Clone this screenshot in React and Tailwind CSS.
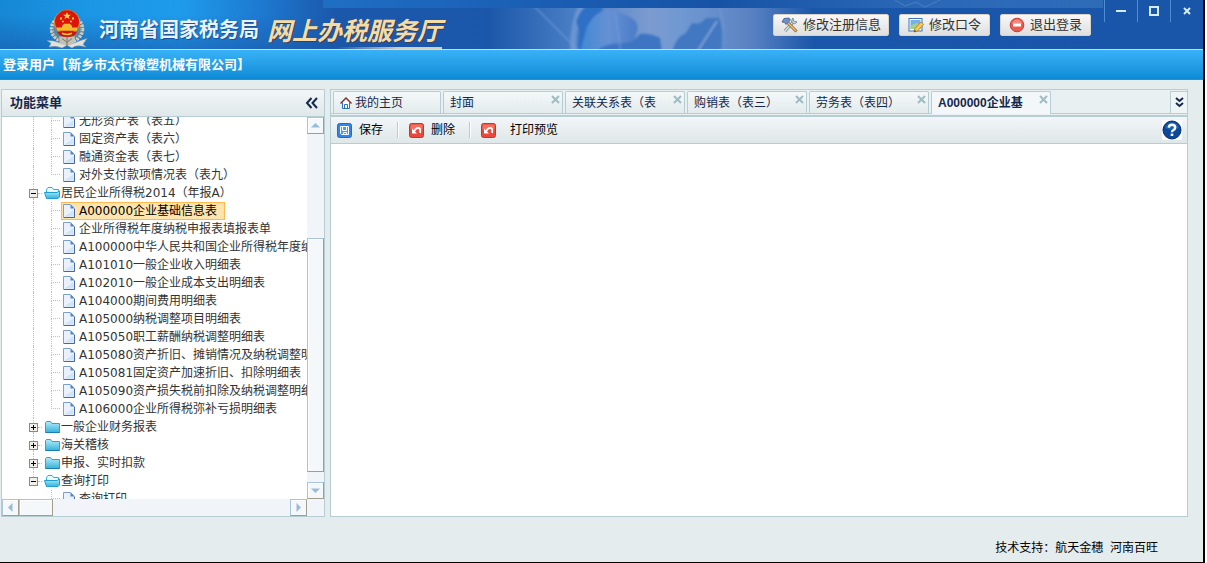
import React from 'react';

const cjk = "font-['Liberation_Sans','Noto_Sans_CJK_SC',sans-serif]";

const tree = [
  {
    children: ['无形资产表（表五）', '固定资产表（表六）', '融通资金表（表七）', '对外支付款项情况表（表九）'],
  },
  {
    label: '居民企业所得税2014（年报A）',
    open: true,
    children: [
      'A000000企业基础信息表',
      '企业所得税年度纳税申报表填报表单',
      'A100000中华人民共和国企业所得税年度纳税申报表',
      'A101010一般企业收入明细表',
      'A102010一般企业成本支出明细表',
      'A104000期间费用明细表',
      'A105000纳税调整项目明细表',
      'A105050职工薪酬纳税调整明细表',
      'A105080资产折旧、摊销情况及纳税调整明细表',
      'A105081固定资产加速折旧、扣除明细表',
      'A105090资产损失税前扣除及纳税调整明细表',
      'A106000企业所得税弥补亏损明细表',
    ],
  },
  { label: '一般企业财务报表' },
  { label: '海关稽核' },
  { label: '申报、实时扣款' },
  { label: '查询打印', open: true, last: true, children: ['查询打印'] },
];

const tabs = ['封面', '关联关系表（表', '购销表（表三）', '劳务表（表四）', 'A000000企业基'];

function Emblem() {
  return (
    <svg width="44" height="42" viewBox="0 0 44 44" preserveAspectRatio="none" className="shrink-0" aria-hidden="true">
      <ellipse cx="22" cy="23" rx="16" ry="14" fill="#8b8f88" opacity=".55" />
      <ellipse cx="22" cy="23" rx="15.5" ry="14" fill="none" stroke="#d3cdbb" strokeWidth="3.5" strokeDasharray="2.5 1" />
      <ellipse cx="22" cy="23" rx="14.5" ry="13" fill="none" stroke="#726c60" strokeWidth="1" strokeDasharray="1 2" />
      <path d="M2 35 Q9 35 13 37 Q22 41 31 37 Q35 35 42 33 L38 39 L41 42 Q31 39 27 43 L22 40 L17 43 Q11 40 4 42 L6 38Z" fill="#e2e2da" stroke="#8b97a0" strokeWidth=".6" />
      <path d="M14 31 L30 31 L29 38 Q22 42 15 38Z" fill="#c5c1b2" />
      <path d="M17 33 L22 37 L27 33 M22 31 V41" stroke="#77746a" strokeWidth="1" fill="none" />
      <circle cx="22" cy="16" r="13" fill="#e08a24" />
      <circle cx="22" cy="15.5" r="12" fill="#dc140e" />
      <path d="M22 5.5 l1.1 2.6 2.8 .1 -2.2 1.7 .8 2.7 -2.5 -1.5 -2.5 1.5 .8 -2.7 -2.2 -1.7 2.8 -.1z" fill="#ffd93e" />
      <path d="M15 11h2v2h-2z M27 11h2v2h-2z M17 14.5h2v1.5h-2z M25 14.5h2v1.5h-2z" fill="#ffcf35" />
      <path d="M17 20 L19 17.5 H25 L27 20 V21.5 H32 V25 H12 V21.5 H17Z" fill="#f3b82c" />
      <path d="M12 26 H32 Q30 31.5 22 31.5 Q14 31.5 12 26Z" fill="#c91610" />
      <path d="M17 27.5 Q22 30 27 27.5" stroke="#f3c233" strokeWidth="1.5" fill="none" />
    </svg>
  );
}

function Banner() {
  return (
    <svg className="absolute inset-0 h-full w-full" viewBox="0 0 1203 49" preserveAspectRatio="none" aria-hidden="true">
      <defs>
        <linearGradient id="base">
          <stop offset="0" stopColor="#1687d4" />
          <stop offset=".07" stopColor="#1b96e4" />
          <stop offset=".15" stopColor="#1f9bec" />
          <stop offset=".22" stopColor="#1d78ce" />
          <stop offset=".28" stopColor="#1b57aa" />
          <stop offset="1" stopColor="#1955a8" />
        </linearGradient>
        <linearGradient id="shade" x2="0" y2="1">
          <stop offset=".3" stopColor="#1a56a8" stopOpacity="0" />
          <stop offset="1" stopColor="#1a56a8" stopOpacity=".55" />
        </linearGradient>
        <linearGradient id="top">
          <stop offset="0" stopColor="#1e6fc4" />
          <stop offset=".3" stopColor="#1a5db2" />
          <stop offset=".5" stopColor="#1653a6" />
          <stop offset=".75" stopColor="#2a67b5" />
          <stop offset="1" stopColor="#2f6cb8" />
        </linearGradient>
        <linearGradient id="glow">
          <stop offset="0" stopColor="#1955a8" />
          <stop offset=".28" stopColor="#4a80c6" />
          <stop offset=".5" stopColor="#7c9bd0" />
          <stop offset=".6" stopColor="#6f98d2" />
          <stop offset=".8" stopColor="#5b83c3" />
          <stop offset="1" stopColor="#1955a8" />
        </linearGradient>
        <linearGradient id="globe">
          <stop offset="0" stopColor="#4189d4" />
          <stop offset=".5" stopColor="#6690d4" />
          <stop offset="1" stopColor="#4a7cc8" />
        </linearGradient>
        <filter id="soft">
          <feGaussianBlur stdDeviation=".8" />
        </filter>
        <clipPath id="band">
          <rect x="480" y="8" width="340" height="41" />
        </clipPath>
      </defs>
      <rect width="1203" height="49" fill="url(#base)" />
      <rect width="420" height="49" fill="url(#shade)" />
      <g clipPath="url(#band)">
        <rect x="485" y="8" width="330" height="41" fill="url(#glow)" />
        <g filter="url(#soft)">
          <path d="M573 52 Q572 24 582 5" stroke="#8ba9dc" strokeWidth="6" opacity=".5" fill="none" />
          <path d="M578 52 L579 30 L576 22 Q579 11 587 5 L602 5 Q604 12 600 18 L596 52Z" fill="#2d70c5" />
          <path d="M587 27 Q594 12 608 9 L626 15 Q640 21 637 31 Q633 43 632 52 L580 52Z" fill="url(#globe)" />
          <path d="M596 52 Q600 46 612 44 L632 42 L640 34 Q650 33 660 38 L662 52Z" fill="#3c75c2" />
          <path d="M672 52 Q676 37 686 33 L692 23 Q700 26 706 18 L719 18 Q725 32 722 52Z" fill="#4277c1" />
          <path d="M697 52 L717 21" stroke="#7ba2d8" strokeWidth="2" fill="none" />
          <path d="M533 5 L580 52 M615 12 L621 52" stroke="#79a3dc" strokeWidth="1.5" opacity=".6" />
          <path d="M718 5 Q726 24 722 52" stroke="#6f97d2" strokeWidth="3" opacity=".5" fill="none" />
        </g>
      </g>
      <rect x="323" width="780" height="8" fill="url(#top)" />
      <path d="M895 0 L905 6 L916 2 L925 7 L940 0" stroke="#6897ce" strokeWidth="1" opacity=".5" fill="none" />
    </svg>
  );
}

function ToolsIcon() {
  return (
    <svg width="18" height="18" viewBox="0 0 18 18" aria-hidden="true">
      <path d="M4 15 L13 5" stroke="#6d7b86" strokeWidth="3" />
      <path d="M4 15 L13 5" stroke="#dfe6ea" strokeWidth="1.6" />
      <path d="M12 2 L12.5 5 L16 6 Q14 9 11 7 Q10 4 12 2" fill="#cfd8de" stroke="#6d7b86" strokeWidth=".8" />
      <path d="M6 6 L15.5 15.5" stroke="#8d5f20" strokeWidth="3" />
      <path d="M6.5 6.5 L15 15" stroke="#eebf76" strokeWidth="1.6" />
      <path d="M1 6 L3 2.5 L8 2 L9.5 4 L5 8.5 L3.5 6.5Z" fill="#6b8fc7" stroke="#3d5c8b" strokeWidth=".8" />
    </svg>
  );
}

function EditIcon() {
  return (
    <svg width="16" height="16" viewBox="0 0 16 16" aria-hidden="true">
      <rect x="1" y="1.5" width="13" height="12.5" fill="#fff" stroke="#3c74b4" />
      <rect x="2.5" y="3" width="10" height="9" fill="#75b1e6" />
      <path d="M2.5 12 V9 Q7 5 12.5 7 V12Z" fill="#a4d08f" />
      <path d="M6 15 L7 11.5 L13 5 L15.5 7.5 L9.5 14Z" fill="#fbc85a" stroke="#bd7d1d" strokeWidth=".9" />
      <path d="M6 15 L6.6 12.8 L8.2 14.3Z" fill="#5b4126" />
    </svg>
  );
}

function StopIcon() {
  return (
    <svg width="16" height="16" viewBox="0 0 16 16" aria-hidden="true">
      <circle cx="8" cy="8" r="6.8" fill="#ea5a4e" stroke="#c73e35" />
      <path d="M2.5 6.5 Q8 -1.5 13.5 6.5Z" fill="#f08a7f" />
      <rect x="4" y="6.5" width="8" height="3" fill="#fff" />
    </svg>
  );
}

function FileIcon() {
  return (
    <svg width="12" height="14" viewBox="0 0 12 14" className="shrink-0" aria-hidden="true">
      <path d="M.5 .5 H7.5 L11.5 4.5 V13.5 H.5Z" fill="#e9f2fc" stroke="#7d9fce" />
      <path d="M1.5 12.5 L10.5 6 V12.5Z" fill="#cfe4f9" />
      <path d="M7.5 .5 V4.5 H11.5Z" fill="#5f83be" />
      <path d="M11.5 5 V13.5 H1" fill="none" stroke="#4a68a0" />
    </svg>
  );
}

function FolderIcon({ open }) {
  return (
    <svg width="16" height="14" viewBox="0 0 16 14" className="shrink-0" aria-hidden="true">
      <defs>
        <linearGradient id="folder" x2="0" y2="1">
          <stop offset="0" stopColor="#b4ecf8" />
          <stop offset="1" stopColor="#35b2dc" />
        </linearGradient>
      </defs>
      {open ? (
        <>
          <path d="M2.5 7 V3.5 L4 1.5 H8 L9.5 3.5 H14.5 V7" fill="#eefaff" stroke="#2cb0dd" />
          <path d="M.5 6.5 H13 L15.5 5 V11 L14 12.5 H2.5Z" fill="url(#folder)" stroke="#1d9fd2" />
        </>
      ) : (
        <>
          <path d="M1.5 12.5 V2.5 L2.5 1.5 H6.5 L8 3.5 H15.5 V12.5Z" fill="url(#folder)" stroke="#2ca4cf" />
          <path d="M1.5 12.5 H15.5" stroke="#187fae" />
        </>
      )}
    </svg>
  );
}

function Expander({ open }) {
  return (
    <svg width="9" height="9" viewBox="0 0 9 9" className="block shrink-0" aria-hidden="true">
      <rect x=".5" y=".5" width="8" height="8" fill="#f1efe9" stroke="#7b8c9c" />
      <path d={open ? 'M2 4.5H7' : 'M2 4.5H7M4.5 2V7'} stroke="#000" />
    </svg>
  );
}

function Leaf({ label, selected, end, rail }) {
  return (
    <li className="flex h-[18px]">
      <div className={'w-[18px] shrink-0 ' + (rail ? 'border-l border-dotted border-[#c0c0c0]' : '')} />
      <div className="mr-px w-[9px] shrink-0">
        <div className="h-[9px] border-b border-l border-dotted border-[#c0c0c0]" />
        {!end && <div className="h-[9px] border-l border-dotted border-[#c0c0c0]" />}
      </div>
      <button
        type="button"
        className={
          'flex items-center gap-1 whitespace-nowrap border pl-px pr-[7px] ' +
          (selected ? 'border-[#ffb951] bg-[#ffe4ad] text-black' : 'border-transparent text-[#333]')
        }
      >
        <FileIcon />
        {label}
      </button>
    </li>
  );
}

function Branch({ node }) {
  return (
    <li>
      {node.label && (
        <button type="button" className="-ml-1 flex h-[18px] items-center whitespace-nowrap text-[#333]">
          <span className="block w-[9px] shrink-0">
            <span className="ml-1 block h-[5px] border-l border-dotted border-[#c0c0c0]" />
            <Expander open={node.open} />
            <span className={'ml-1 block h-1 ' + (node.last ? '' : 'border-l border-dotted border-[#c0c0c0]')} />
          </span>
          <span className="mr-[2px] w-1 border-t border-dotted border-[#c0c0c0]" />
          <FolderIcon open={node.open} />
          <span className="pl-px">{node.label}</span>
        </button>
      )}
      {node.children && (
        <ul>
          {node.children.map((c, i) => (
            <Leaf
              key={c}
              label={c}
              selected={c.startsWith('A000000')}
              rail={!node.last}
              end={!node.last && i === node.children.length - 1}
            />
          ))}
        </ul>
      )}
    </li>
  );
}

const raised = 'border border-t-[#a9c3dc] border-l-[#a9c3dc] border-r-[#a39d8f] border-b-[#a39d8f] bg-[#f5f8fb] shadow-[inset_1px_1px_0_#fff]';

function ScrollButton({ label, d }) {
  return (
    <button type="button" aria-label={label} className={'flex size-[17px] shrink-0 items-center justify-center ' + raised}>
      <svg width="9" height="9" viewBox="0 0 9 9" aria-hidden="true">
        <path d={d} fill="#98bcd8" />
      </svg>
    </button>
  );
}

function SaveIcon() {
  return (
    <svg width="15" height="15" viewBox="0 0 15 15" aria-hidden="true">
      <rect x=".5" y=".5" width="14" height="14" rx="2" fill="#3187e8" stroke="#1b6bd0" />
      <path d="M3.5 3.5 H11.5 V11.5 H4.5 L3.5 10.5Z" fill="#4c9bf1" stroke="#fff" />
      <path d="M5.5 3.5 V7.5 H9.5 V3.5 M6.5 11.5 V9.5 H9.5 V11.5" fill="none" stroke="#fff" />
    </svg>
  );
}

function UndoIcon() {
  return (
    <svg width="15" height="15" viewBox="0 0 15 15" aria-hidden="true">
      <rect x=".5" y=".5" width="14" height="14" rx="2" fill="#e8493c" stroke="#cb332b" />
      <rect x="1.5" y="1.5" width="12" height="5" rx="1" fill="#f1705f" />
      <path d="M5 8.5 Q7 4.5 10 5 Q12 6 11 10" fill="none" stroke="#fff" strokeWidth="1.8" />
      <path d="M3 5.5 V10.5 H8Z" fill="#fff" />
    </svg>
  );
}

function Divider() {
  return <span className="h-4 w-[2px] border-l border-[#b5cdd3] bg-white" />;
}

function WindowButton({ label, children }) {
  return (
    <button type="button" aria-label={label} className="flex h-[22px] w-[33px] items-center justify-center border-l border-[#4d8dd0]">
      <svg width="12" height="12" viewBox="0 0 12 12" fill="none" stroke="#d5ecfb" strokeWidth="2" aria-hidden="true">
        {children}
      </svg>
    </button>
  );
}

const headButton =
  'flex h-[22px] items-center rounded-[2px] border border-[#d8d2c8] bg-linear-to-b from-[#f8f8f8] to-[#dfdfdf] text-[13px] whitespace-nowrap text-[#333]';

export default function App() {
  return (
    <div className={'h-screen bg-white pr-[2px] text-[12px] leading-4 ' + cjk}>
      <div className="flex h-full flex-col overflow-hidden border-r-2 border-b border-black bg-[#e5ecee]">
        <header className="relative h-[49px] shrink-0 bg-[#1955a8]">
          <Banner />
          <div className="relative flex h-full justify-between">
            <div className="flex items-end pl-[45px]">
              <Emblem />
              <h1 className="flex items-end whitespace-nowrap">
                <span className="pb-[7px] pl-[10px] text-[20px] leading-6 font-bold text-[#e9f3fb] [text-shadow:1px_1px_1px_#174f94]">河南省国家税务局</span>
                <span className="ml-2 bg-linear-to-r from-transparent to-[#d9cfb8] to-60% bg-[length:60%_2px] bg-right-bottom bg-no-repeat pb-[2px] text-[25px] leading-[32px] font-bold text-[#f5dca6] italic [text-shadow:1px_1px_0_#3b3f58]">网上办税服务厅</span>
              </h1>
            </div>
            <div className="flex">
              <div className="flex gap-[10px] pt-[14px] pr-[13px]">
                <button type="button" className={headButton + ' gap-1 px-[7px]'}>
                  <ToolsIcon />
                  修改注册信息
                </button>
                <button type="button" className={headButton + ' gap-[5px] px-2'}>
                  <EditIcon />
                  修改口令
                </button>
                <button type="button" className={headButton + ' gap-[5px] px-2'}>
                  <StopIcon />
                  退出登录
                </button>
              </div>
              <div className="flex">
                <WindowButton label="最小化">
                  <path d="M1 6H11" />
                </WindowButton>
                <WindowButton label="最大化">
                  <path d="M2 2H10V10H2Z" />
                </WindowButton>
                <WindowButton label="关闭">
                  <path d="M3 3L9 9M9 3L3 9" />
                </WindowButton>
              </div>
            </div>
          </div>
        </header>

        <div className="flex h-[31px] shrink-0 items-center border-t border-b border-t-[#b8e3fa] border-b-[#2c8fd0] bg-linear-to-b from-[#38b2f7] to-[#0d8bd6] pl-[3px] text-[13px] font-bold whitespace-nowrap text-white">
          登录用户【新乡市太行橡塑机械有限公司】
        </div>

        <div className="flex min-h-0 flex-1 gap-[5px] pt-[9px] pr-[15px] pl-px">
          <aside className="flex w-[324px] shrink-0 flex-col border border-[#b5cdd3] bg-white">
            <div className="flex h-[27px] shrink-0 items-center justify-between border-b border-[#b5cdd3] bg-linear-to-b from-[#f2f6f7] to-[#dfe8ea] pr-[6px] pl-2">
              <h2 className="text-[13px] font-bold text-[#15284b]">功能菜单</h2>
              <button type="button" aria-label="收起菜单">
                <svg width="13" height="12" viewBox="0 0 13 12" fill="none" stroke="#15284b" strokeWidth="2" aria-hidden="true">
                  <path d="M6.5 1L2 6L6.5 11M12 1L7.5 6L12 11" />
                </svg>
              </button>
            </div>
            <div className="flex min-h-0 flex-1">
              <nav className="min-w-0 flex-1 overflow-hidden font-['DejaVu_Sans','Noto_Sans_CJK_SC',sans-serif]" aria-label="功能菜单">
                <ul className="-mt-[5px] pl-[31px]">
                  {tree.map((n, i) => (
                    <Branch key={i} node={n} />
                  ))}
                </ul>
              </nav>
              <div className="flex w-[17px] shrink-0 flex-col bg-[#f1f5f9]">
                <ScrollButton label="向上滚动" d="M4.5 2L9 6.5H0Z" />
                <div className="grow-[105]" />
                <div className={'grow-[233] ' + raised} />
                <div className="grow-[10]" />
                <ScrollButton label="向下滚动" d="M4.5 7L9 2.5H0Z" />
              </div>
            </div>
            <div className="flex h-[17px] shrink-0 bg-[#f1f5f9] pr-[17px]">
              <ScrollButton label="向左滚动" d="M2 4.5L6.5 0V9Z" />
              <div className={'w-[34px] ' + raised} />
              <div className="flex-1" />
              <ScrollButton label="向右滚动" d="M7 4.5L2.5 0V9Z" />
            </div>
          </aside>

          <main className="flex min-w-0 flex-1 flex-col border border-[#b5cdd3] bg-white">
            <div className="flex h-[27px] shrink-0 border-b-2 border-[#b5cdd3] bg-[#e9f0f2] pt-px">
              <div className="flex h-[23px] flex-1 border-b border-[#b5cdd3] pl-[2px]">
                <div className="flex h-[22px] gap-[2px]" role="tablist">
                  <button type="button" role="tab" className="flex w-[108px] items-center gap-[3px] rounded-t-[2px] border border-b-0 border-[#b5cdd3] bg-linear-to-b from-[#f4f8f9] to-[#e3ebed] pl-[6px] text-[#15284b]">
                    <svg width="12" height="12" viewBox="0 0 12 12" fill="none" aria-hidden="true">
                      <path d="M2.5 5.5V11.5H9.5V5.5" fill="#fff" stroke="#2f6fbd" />
                      <path d="M4.5 11V7.5H7.5V11" stroke="#2f6fbd" />
                      <path d="M.5 6.5L6 1L11.5 6.5" stroke="#7d2a2a" strokeWidth="1.4" />
                    </svg>
                    我的主页
                  </button>
                  {tabs.map((t, i) => {
                    const active = i === tabs.length - 1;
                    return (
                      <div
                        key={t}
                        className={
                          'flex w-[120px] justify-between rounded-t-[2px] border border-b-0 border-[#b5cdd3] pr-[2px] pl-[6px] text-[#15284b] ' +
                          (active ? 'h-[23px] bg-[#f3f7f9] font-bold' : 'bg-linear-to-b from-[#f4f8f9] to-[#e3ebed]')
                        }
                      >
                        <button type="button" role="tab" aria-selected={active} className="h-[21px] whitespace-nowrap">
                          {t}
                        </button>
                        <button type="button" aria-label={'关闭 ' + t} className="self-start pt-[3px]">
                          <svg width="9" height="9" viewBox="0 0 9 9" stroke="#9dbcc3" strokeWidth="2" aria-hidden="true">
                            <path d="M1 1L8 8M8 1L1 8" />
                          </svg>
                        </button>
                      </div>
                    );
                  })}
                </div>
                <button type="button" aria-label="更多标签" className="ml-auto flex h-[22px] w-[17px] items-center justify-center border border-r-0 border-b-0 border-[#b5cdd3] bg-[#eff4f5]">
                  <svg width="9" height="11" viewBox="0 0 9 11" fill="none" stroke="#15284b" strokeWidth="2" aria-hidden="true">
                    <path d="M1 1L4.5 4L8 1M1 6L4.5 9L8 6" />
                  </svg>
                </button>
              </div>
            </div>
            <div className="flex h-[27px] shrink-0 items-center border-b border-[#b5cdd3] bg-linear-to-b from-[#f2f6f8] to-[#dfe7e9] pr-[5px] pl-[6px] text-black">
              <button type="button" className="flex items-center gap-[7px] pr-[14px]">
                <SaveIcon />
                保存
              </button>
              <Divider />
              <button type="button" className="flex items-center gap-[7px] pr-[14px] pl-[10px]">
                <UndoIcon />
                删除
              </button>
              <Divider />
              <button type="button" className="flex items-center gap-[14px] pl-[10px]">
                <UndoIcon />
                打印预览
              </button>
              <button type="button" aria-label="帮助" className="ml-auto bg-white">
                <svg width="20" height="20" viewBox="0 0 20 20" aria-hidden="true">
                  <circle cx="10" cy="10" r="9" fill="#0b4a9a" stroke="#082e63" />
                  <path d="M3 8Q5 2.5 10 2.5Q15 2.5 17 8Q10 12 3 8Z" fill="#2c77c8" opacity=".6" />
                  <path d="M6.8 7.6Q7 4.8 10 4.8Q13.2 4.8 13.2 7.5Q13.2 9.2 11.2 10.2Q10 10.8 10 12.2" fill="none" stroke="#fff" strokeWidth="2.4" />
                  <rect x="8.7" y="13.6" width="2.6" height="2.4" fill="#fff" />
                </svg>
              </button>
            </div>
          </main>
        </div>

        <footer className="flex h-[45px] shrink-0 items-end justify-end pr-[45px] pb-[6px] text-black">
          技术支持：航天金穗&nbsp; 河南百旺
        </footer>
      </div>
    </div>
  );
}
